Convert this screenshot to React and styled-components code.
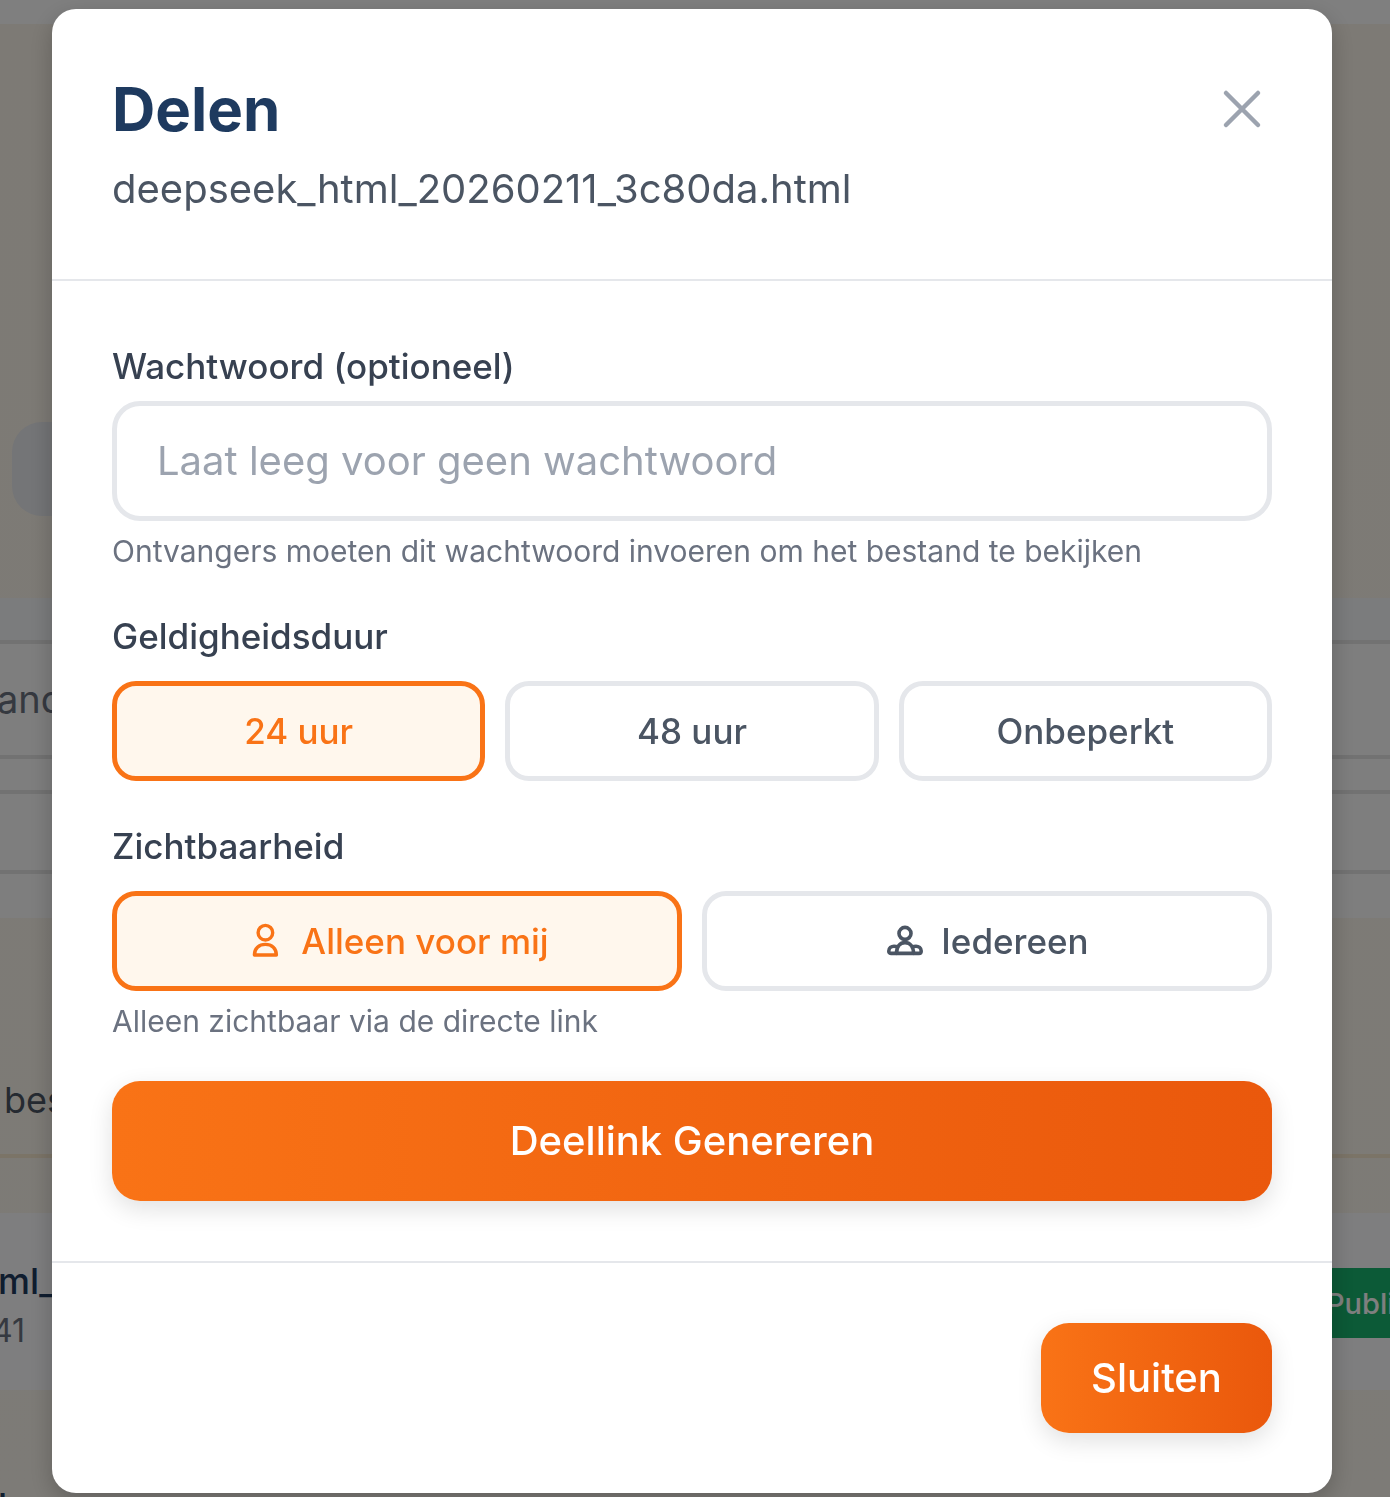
import React from "react";
import styled, { createGlobalStyle } from "styled-components";

const Global = createGlobalStyle`
  html, body { margin: 0; padding: 0; height: 1497px; overflow: hidden; }
  body { font-family: Inter, "Noto Sans", sans-serif; background: #fbf7ef; }
  * { box-sizing: border-box; }
`;

/* page behind the dialog */
const Page = styled.div`
  display: flex;
  flex-direction: column;
  height: 1497px;
  overflow: hidden;
  background: linear-gradient(180deg, #fbf5ea, #fbf6ee);
`;
const TopBar = styled.div`
  height: 24px;
  flex: none;
  background: #ffffff;
`;
const Hero = styled.div`
  height: 574px;
  flex: none;
  display: flex;
  align-items: flex-start;
  padding: 398px 0 0 12px;
`;
const RoundButton = styled.div`
  width: 94px;
  height: 94px;
  border-radius: 30px;
  background: #e8eaee;
`;
const Panel = styled.div`
  flex: none;
  height: 320px;
  display: flex;
  flex-direction: column;
  background: #fdfdfd;
`;
const PanelHead = styled.div`
  height: 46px;
  flex: none;
  background: #f7f8fa;
  border-bottom: 4px solid #e4e4e4;
`;
const TableRow = styled.div`
  flex: none;
  height: ${(p) => p.$h}px;
  display: flex;
  align-items: center;
  padding-bottom: 2px;
  border-bottom: ${(p) => (p.$line ? "4px solid #e4e4e4" : "none")};
  font-size: 38px;
  color: #6b7280;
  margin-left: -3px;
`;
const Notice = styled.div`
  flex: none;
  height: 240px;
  display: flex;
  align-items: flex-end;
  color: #4b5563;
  font-size: 36px;
  line-height: 44px;
  padding: 0 0 32px 4px;
  border-bottom: 4px solid #f7e8cf;
`;
const Gap = styled.div`
  flex: none;
  height: 55px;
`;
const FileCard = styled.div`
  flex: none;
  height: 177px;
  background: #fdfdfe;
  display: flex;
  justify-content: space-between;
  align-items: flex-start;
  padding-top: 48px;
`;
const FileText = styled.div`
  display: flex;
  flex-direction: column;
  margin-left: -2px;
`;
const FileName = styled.div`
  font-size: 36px;
  font-weight: 500;
  line-height: 40px;
  color: #1e3a5f;
`;
const NextFileName = styled(FileName)`
  margin: 135px 0 0 0;
`;
const FileDate = styled.div`
  font-size: 32px;
  line-height: 40px;
  margin: 10px 0 0 -6px;
  color: #6b7280;
`;
const Badge = styled.div`
  width: 58px;
  height: 70px;
  margin-top: 7px;
  display: flex;
  align-items: center;
  background: #18b46e;
  font-size: 29px;
  font-weight: 500;
  white-space: nowrap;
  color: #ffffff;
`;
const BadgeText = styled.span`
  margin-left: -6px;
`;

/* dialog */
const Overlay = styled.div`
  position: fixed;
  inset: 0;
  display: flex;
  align-items: flex-start;
  padding: 9px 0 0 52px;
  background: rgba(0, 0, 0, 0.5);
`;
const Modal = styled.div`
  width: 1280px;
  height: 1484px;
  display: flex;
  flex-direction: column;
  background: #ffffff;
  border-radius: 24px;
  box-shadow: 0 8px 24px rgba(0, 0, 0, 0.22);
`;
const Header = styled.header`
  display: flex;
  justify-content: space-between;
  align-items: flex-start;
  padding: 60px;
  border-bottom: 2px solid #e5e7eb;
`;
const TitleBlock = styled.div`
  display: flex;
  flex-direction: column;
`;
const Title = styled.h2`
  margin: 0;
  font-size: 60px;
  line-height: 80px;
  font-weight: 700;
  color: #1e3a5f;
`;
const FileLabel = styled.div`
  margin-top: 10px;
  font-size: 40px;
  line-height: 60px;
  color: #4b5563;
`;
const CloseButton = styled.button`
  width: 40px;
  height: 40px;
  margin: 20px 10px 0 0;
  padding: 0;
  border: 0;
  background: none;
  color: #9ca3af;
  display: flex;
`;
const Body = styled.div`
  display: flex;
  flex-direction: column;
  padding: 60px;
  border-bottom: 2px solid #e5e7eb;
`;
const Label = styled.label`
  display: block;
  font-size: 35px;
  line-height: 50px;
  font-weight: 500;
  color: #374151;
  margin-top: ${(p) => p.$top || 0}px;
  margin-bottom: ${(p) => p.$bottom + 2}px;
`;
const Input = styled.input`
  width: 100%;
  height: 120px;
  padding: 0 40px 2px;
  border: 5px solid #e5e7eb;
  border-radius: 28px;
  outline: none;
  font-family: inherit;
  font-size: 40px;
  color: #374151;
  &::placeholder {
    color: #9ca3af;
    opacity: 1;
  }
`;
const Hint = styled.p`
  margin: ${(p) => p.$top}px 0 2px;
  font-size: 30px;
  line-height: 42px;
  color: #6b7280;
`;
const Options = styled.div`
  display: grid;
  grid-template-columns: repeat(${(p) => p.$cols}, 1fr);
  gap: 20px;
`;
const Option = styled.button`
  height: 100px;
  padding: 0;
  border: 5px solid ${(p) => (p.$active ? "#f97316" : "#e5e7eb")};
  border-radius: 24px;
  background: ${(p) => (p.$active ? "#fff7ed" : "#ffffff")};
  color: ${(p) => (p.$active ? "#f97316" : "#4b5563")};
  font-family: inherit;
  font-size: 35px;
  font-weight: 500;
  display: flex;
  align-items: center;
  justify-content: center;
  gap: 16px;
`;
const PrimaryButton = styled.button`
  width: ${(p) => p.$width || "100%"};
  height: ${(p) => p.$height}px;
  margin-top: ${(p) => p.$top || 0}px;
  padding: 0 0 2px;
  border: 0;
  border-radius: 28px;
  background: linear-gradient(90deg, #f97316 0%, #ea580c 100%);
  color: #ffffff;
  font-family: inherit;
  font-size: 40px;
  font-weight: 500;
  box-shadow: 0 8px 24px rgba(0, 0, 0, 0.12);
`;
const Footer = styled.footer`
  display: flex;
  justify-content: flex-end;
  padding: 60px;
`;

const PersonIcon = () => (
  <svg width="40" height="40" viewBox="0 0 40 40" fill="none" stroke="currentColor" strokeWidth="3.4" strokeLinejoin="round">
    <circle cx="20.4" cy="11.7" r="7.3" />
    <path d="M9.4 34 C9.4 27.4 14 23.4 20.4 23.4 C26.8 23.4 31.4 27.4 31.4 34 Z" />
  </svg>
);

const GroupIcon = () => (
  <svg width="40" height="40" viewBox="0 0 40 40" fill="none" stroke="currentColor" strokeWidth="3.6" strokeLinejoin="round">
    <circle cx="20" cy="12.4" r="6" />
    <path d="M11.5 32.4 C11.5 25.4 15 21.6 20 21.6 C25 21.6 28.5 25.4 28.5 32.4 Z" />
    <path d="M11.5 32.4 H6 C4 32.4 3.8 31 3.8 30 C3.8 27 6.5 25.2 9 25.2 C10.5 25.2 11.5 25.5 13 26.2" />
    <path d="M28.5 32.4 H34 C36 32.4 36.2 31 36.2 30 C36.2 27 33.5 25.2 31 25.2 C29.5 25.2 28.5 25.5 27 26.2" />
  </svg>
);

const App = () => (
  <>
    <Global />
    <Page>
      <TopBar />
      <Hero>
        <RoundButton />
      </Hero>
      <Panel>
        <PanelHead />
        <TableRow $h={115} $line>and</TableRow>
        <TableRow $h={35} $line />
        <TableRow $h={80} $line />
        <TableRow $h={44} />
      </Panel>
      <Notice>bestand</Notice>
      <Gap />
      <FileCard>
        <FileText>
          <FileName>ml_2</FileName>
          <FileDate>41</FileDate>
          <NextFileName>l</NextFileName>
        </FileText>
        <Badge><BadgeText>Publiek</BadgeText></Badge>
      </FileCard>
    </Page>
    <Overlay>
      <Modal>
        <Header>
          <TitleBlock>
            <Title>Delen</Title>
            <FileLabel>deepseek_html_20260211_3c80da.html</FileLabel>
          </TitleBlock>
          <CloseButton aria-label="Sluiten">
            <svg width="40" height="40" viewBox="0 0 40 40" fill="none" stroke="currentColor" strokeWidth="4.5" strokeLinecap="round">
              <path d="M4 4 L36 36 M36 4 L4 36" />
            </svg>
          </CloseButton>
        </Header>
        <Body>
          <Label $bottom={8}>Wachtwoord (optioneel)</Label>
          <Input placeholder="Laat leeg voor geen wachtwoord" />
          <Hint $top={9}>Ontvangers moeten dit wachtwoord invoeren om het bestand te bekijken</Hint>
          <Label $top={37} $bottom={18}>Geldigheidsduur</Label>
          <Options $cols={3}>
            <Option $active>24 uur</Option>
            <Option>48 uur</Option>
            <Option>Onbeperkt</Option>
          </Options>
          <Label $top={40} $bottom={18}>Zichtbaarheid</Label>
          <Options $cols={2}>
            <Option $active><PersonIcon />Alleen voor mij</Option>
            <Option><GroupIcon />Iedereen</Option>
          </Options>
          <Hint $top={9}>Alleen zichtbaar via de directe link</Hint>
          <PrimaryButton $height={120} $top={37}>Deellink Genereren</PrimaryButton>
        </Body>
        <Footer>
          <PrimaryButton $width="231px" $height={110}>Sluiten</PrimaryButton>
        </Footer>
      </Modal>
    </Overlay>
  </>
);

export default App;
